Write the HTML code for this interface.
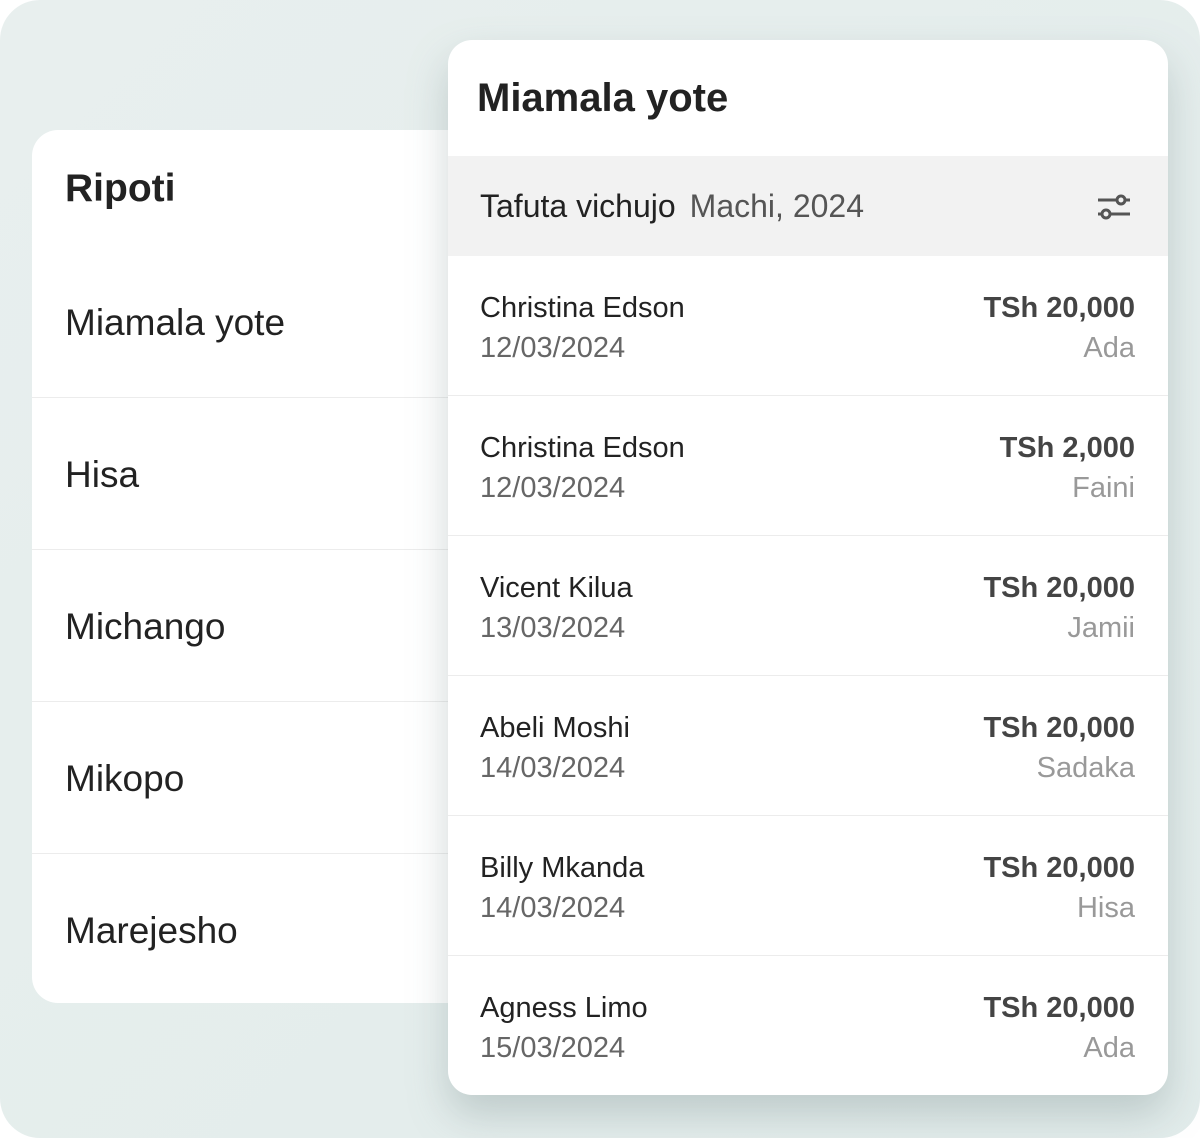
<!DOCTYPE html>
<html><head><meta charset="utf-8"><style>
*{margin:0;padding:0;box-sizing:border-box}
html,body{width:1200px;height:1138px;background:#fff;overflow:hidden;font-family:"Liberation Sans",sans-serif}
.bg{position:absolute;left:0;top:0;width:1200px;height:1138px;border-radius:40px;background:linear-gradient(135deg,#e8efee,#e2eceb)}
.left{position:absolute;left:32px;top:130px;width:440px;height:873px;background:#fff;border-radius:26px 0 0 26px;overflow:hidden}
.left h2{position:absolute;left:33px;top:37px;font-size:39px;font-weight:bold;color:#222}
.left .it{position:absolute;left:0;width:440px;height:152px;border-top:1px solid #ececec;font-size:37px;color:#222;padding-left:33px;line-height:154px}
.right{position:absolute;left:448px;top:40px;width:720px;height:1055px;background:#fff;border-radius:24px;overflow:hidden;box-shadow:0 20px 40px rgba(120,140,140,.35)}
.right h1{position:absolute;left:29px;top:36px;font-size:40px;font-weight:bold;color:#222}
.fb{position:absolute;left:0;top:116px;width:720px;height:100px;background:#f2f2f2}
.fb .t{position:absolute;left:32px;top:32px;font-size:32px;color:#222}
.fb .t span{color:#555;margin-left:14px}
.fb svg{position:absolute;left:648px;top:34px}
.row{position:absolute;left:0;width:720px;height:140px;border-top:1px solid #ececec}
.row .n{position:absolute;left:32px;top:36px;font-size:29px;color:#222}
.row .d{position:absolute;left:32px;top:76px;font-size:29px;color:#666}
.row .a{position:absolute;right:33px;top:36px;font-size:29px;font-weight:bold;color:#444}
.row .c{position:absolute;right:33px;top:76px;font-size:29px;color:#999}
</style></head><body>
<div class="bg"></div>
<div class="left">
<h2>Ripoti</h2>
<div class="it" style="top:116px;border-top:none">Miamala yote</div>
<div class="it" style="top:267px">Hisa</div>
<div class="it" style="top:419px">Michango</div>
<div class="it" style="top:571px">Mikopo</div>
<div class="it" style="top:723px">Marejesho</div>
</div>
<div class="right">
<h1>Miamala yote</h1>
<div class="fb"><div class="t">Tafuta vichujo<span>Machi, 2024</span></div>
<svg width="36" height="30" viewBox="0 0 36 30"><g stroke="#555" stroke-width="3" fill="none"><line x1="2" y1="10" x2="21" y2="10"/><line x1="29" y1="10" x2="34" y2="10"/><circle cx="25" cy="10" r="4"/><line x1="2" y1="24" x2="6" y2="24"/><line x1="14" y1="24" x2="34" y2="24"/><circle cx="10" cy="24" r="4"/></g></svg></div>
<div class="row" style="top:216px;border-top:none"><div class="n">Christina Edson</div><div class="d">12/03/2024</div><div class="a">TSh 20,000</div><div class="c">Ada</div></div>
<div class="row" style="top:355px"><div class="n">Christina Edson</div><div class="d">12/03/2024</div><div class="a">TSh 2,000</div><div class="c">Faini</div></div>
<div class="row" style="top:495px"><div class="n">Vicent Kilua</div><div class="d">13/03/2024</div><div class="a">TSh 20,000</div><div class="c">Jamii</div></div>
<div class="row" style="top:635px"><div class="n">Abeli Moshi</div><div class="d">14/03/2024</div><div class="a">TSh 20,000</div><div class="c">Sadaka</div></div>
<div class="row" style="top:775px"><div class="n">Billy Mkanda</div><div class="d">14/03/2024</div><div class="a">TSh 20,000</div><div class="c">Hisa</div></div>
<div class="row" style="top:915px"><div class="n">Agness Limo</div><div class="d">15/03/2024</div><div class="a">TSh 20,000</div><div class="c">Ada</div></div>
</div>
</body></html>
